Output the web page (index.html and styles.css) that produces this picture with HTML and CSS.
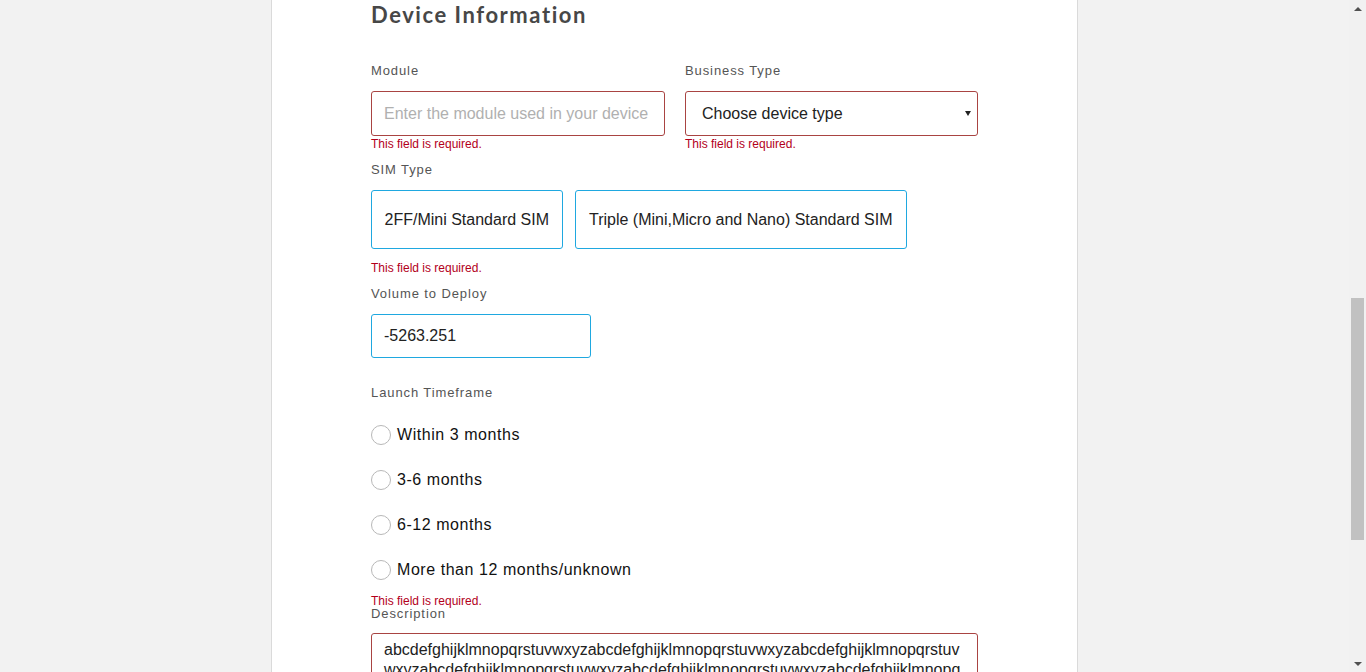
FILE: index.html
```html
<!DOCTYPE html>
<html lang="en">
<head>
<meta charset="utf-8">
<title>Device Information</title>
<link rel="stylesheet" href="styles.css">
</head>
<body>
<div class="viewport">
  <main class="card">
    <h2 class="title">Device Information</h2>

    <div class="row">
      <div class="field">
        <label class="label" for="module">Module</label>
        <input class="input input-error" id="module" type="text" placeholder="Enter the module used in your device">
        <div class="error">This field is required.</div>
      </div>
      <div class="field">
        <label class="label" for="btype">Business Type</label>
        <div class="select-wrap">
          <select class="input input-error select" id="btype">
            <option>Choose device type</option>
          </select>
        </div>
        <div class="error">This field is required.</div>
      </div>
    </div>

    <div class="field field-sim">
      <div class="label">SIM Type</div>
      <div class="sim-options">
        <button class="sim-btn" type="button">2FF/Mini Standard SIM</button>
        <button class="sim-btn sim-btn-wide" type="button">Triple (Mini,Micro and Nano) Standard SIM</button>
      </div>
      <div class="error error-sim">This field is required.</div>
    </div>

    <div class="field field-volume">
      <label class="label" for="volume">Volume to Deploy</label>
      <input class="input input-active volume" id="volume" type="text" value="-5263.251" autofocus>
    </div>

    <div class="field field-launch">
      <div class="label">Launch Timeframe</div>
      <div class="radios">
        <label class="radio"><span class="circle"></span><span class="radio-text">Within 3 months</span></label>
        <label class="radio"><span class="circle"></span><span class="radio-text">3-6 months</span></label>
        <label class="radio"><span class="circle"></span><span class="radio-text">6-12 months</span></label>
        <label class="radio"><span class="circle"></span><span class="radio-text">More than 12 months/unknown</span></label>
      </div>
      <div class="error error-launch">This field is required.</div>
    </div>

    <div class="field field-desc">
      <label class="label label-desc" for="desc">Description</label>
      <textarea class="input input-error textarea" id="desc">abcdefghijklmnopqrstuvwxyzabcdefghijklmnopqrstuvwxyzabcdefghijklmnopqrstuvwxyzabcdefghijklmnopqrstuvwxyzabcdefghijklmnopqrstuvwxyzabcdefghijklmnopq</textarea>
    </div>
  </main>
</div>
<div class="scrollbar">
  <div class="sb-btn"><span class="arrow-up"></span></div>
  <div class="sb-track"><div class="sb-thumb"></div></div>
  <div class="sb-btn"><span class="arrow-down"></span></div>
</div>
<script src="app.js"></script>
</body>
</html>
```

FILE: styles.css
```css
html, body {
  margin: 0;
  padding: 0;
  height: 100%;
}
body {
  display: flex;
  overflow: hidden;
  background: #f2f2f2;
  font-family: "Liberation Sans", Arial, sans-serif;
  color: #222;
}
.viewport {
  flex: 1;
  display: flex;
  justify-content: center;
  overflow: hidden;
}
.card {
  width: 607px;
  padding: 0 99px;
  background: #fff;
  border-left: 1px solid #dadada;
  border-right: 1px solid #dadada;
  min-height: 100%;
}
.title {
  margin: 0;
  font-family: Lato, "Liberation Sans", sans-serif;
  font-weight: 700;
  font-size: 22px;
  line-height: 30px;
  letter-spacing: 1.55px;
  color: #474747;
}
.row {
  display: grid;
  grid-template-columns: 294px 293px;
  column-gap: 20px;
  margin-top: 33px;
}
.field {
  display: flex;
  flex-direction: column;
  align-items: flex-start;
}
.label {
  display: block;
  font-size: 13px;
  line-height: 16px;
  letter-spacing: 0.9px;
  color: #555;
  margin-bottom: 12px;
}
.input {
  box-sizing: border-box;
  width: 100%;
  height: 45px;
  margin: 0;
  padding: 0 12px;
  border: 1px solid #ccc;
  border-radius: 3px;
  background: #fff;
  font-family: "Liberation Sans", Arial, sans-serif;
  font-size: 16px;
  color: #222;
  outline: none;
}
.input::placeholder {
  color: #b0b0b0;
}
.input-error {
  border-color: #a94442;
}
.input-active {
  border-color: #1fa8e0;
}
.select-wrap {
  position: relative;
  width: 100%;
}
.select {
  appearance: none;
  -webkit-appearance: none;
  padding-left: 16px;
  color: #222;
}
.select-wrap::after {
  content: "";
  position: absolute;
  right: 7px;
  top: 20px;
  border-left: 3.5px solid transparent;
  border-right: 3.5px solid transparent;
  border-top: 5px solid #222;
}
.error {
  margin-top: 1px;
  font-size: 12px;
  line-height: 14px;
  color: #b3001b;
}
.field-sim {
  margin-top: 11px;
}
.sim-options {
  display: flex;
  gap: 12px;
}
.sim-btn {
  height: 59px;
  padding: 0 12.5px;
  margin: 0;
  border: 1px solid #1fa8e0;
  border-radius: 3px;
  background: #fff;
  font-family: "Liberation Sans", Arial, sans-serif;
  font-size: 16px;
  color: #222;
  cursor: pointer;
}
.sim-btn-wide {
  padding: 0 13.5px;
}
.error-sim {
  margin-top: 12px;
}
.field-volume {
  margin-top: 11px;
}
.volume {
  width: 220px;
  height: 44px;
  caret-color: #222;
}
.field-launch {
  margin-top: 27px;
}
.radios {
  margin-top: -0.5px;
  display: flex;
  flex-direction: column;
}
.radio {
  display: flex;
  align-items: center;
  height: 45px;
  cursor: pointer;
}
.circle {
  box-sizing: border-box;
  width: 20px;
  height: 20px;
  border: 1px solid #b8b8b8;
  border-radius: 50%;
  background: #fff;
  margin-right: 6px;
}
.radio-text {
  font-size: 16px;
  letter-spacing: 0.55px;
  color: #111;
}
.error-launch {
  margin-top: 2.5px;
  line-height: 12px;
}
.field-desc {
  margin-top: 0;
}
.label-desc {
  line-height: 14px;
  margin-bottom: 12px;
}
.textarea {
  height: 140px;
  padding: 6px 12px;
  line-height: 20px;
  resize: none;
  overflow: hidden;
}
.scrollbar {
  width: 17px;
  flex: none;
  display: flex;
  flex-direction: column;
  background: #f1f1f1;
}
.sb-btn {
  height: 17px;
  display: flex;
  align-items: center;
  justify-content: center;
}
.arrow-up {
  border-left: 4px solid transparent;
  border-right: 4px solid transparent;
  border-bottom: 4px solid #505050;
}
.arrow-down {
  border-left: 4px solid transparent;
  border-right: 4px solid transparent;
  border-top: 4px solid #505050;
}
.sb-track {
  flex: 1;
}
.sb-thumb {
  margin: 281px 2px 0;
  height: 242px;
  background: #c1c1c1;
}
```

FILE: app.js
```js
var vol = document.getElementById('volume');
if (vol) {
  vol.focus();
  var n = vol.value.length;
  vol.setSelectionRange(n, n);
}
```
